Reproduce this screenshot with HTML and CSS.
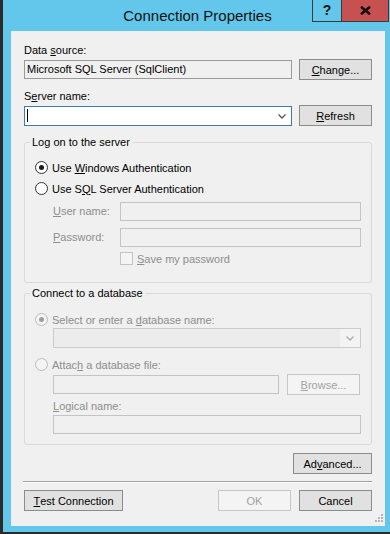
FILE: index.html
```html
<!DOCTYPE html>
<html lang="en">
<head>
<meta charset="utf-8">
<title>Connection Properties</title>
<link rel="stylesheet" href="styles.css">
</head>
<body>
<div class="window">
  <div class="titlebar">
    <div class="title">Connection Properties</div>
    <div class="caption">
      <div class="cap-help">?</div>
      <div class="cap-close"><svg width="11" height="9" viewBox="0 0 11 9"><path d="M1 0.8 L10 8.2 M10 0.8 L1 8.2" stroke="#111" stroke-width="2.6" fill="none"/></svg></div>
    </div>
  </div>
  <div class="client">
    <div class="lbl">Data <u>s</u>ource:</div>
    <div class="row r-ds">
      <div class="tb ro w-ds">Microsoft SQL Server (SqlClient)</div>
      <div class="btn w73"><u>C</u>hange...</div>
    </div>
    <div class="lbl l-server">S<u>e</u>rver name:</div>
    <div class="row r-server">
      <div class="combo focus w-ds"><span class="caret"></span><svg class="chev" width="8" height="5" viewBox="0 0 8 5"><path d="M0.5 0.5 L4 4 L7.5 0.5" stroke="#555" stroke-width="1.3" fill="none"/></svg></div>
      <div class="btn w73"><u>R</u>efresh</div>
    </div>

    <fieldset class="group g-logon">
      <legend>Log on to the server</legend>
      <div class="gbody gb-logon">
        <div class="opt"><span class="radio on"></span><span>Use <u>W</u>indows Authentication</span></div>
        <div class="opt opt2"><span class="radio"></span><span>Use S<u>Q</u>L Server Authentication</span></div>
        <div class="frow fr-user"><span class="flbl dis"><u>U</u>ser name:</span><div class="tb dis w241"></div></div>
        <div class="frow fr-pass"><span class="flbl dis"><u>P</u>assword:</span><div class="tb dis w241"></div></div>
        <div class="chkrow"><span class="chk"></span><span class="dis"><u>S</u>ave my password</span></div>
      </div>
    </fieldset>

    <fieldset class="group g-db">
      <legend>Connect to a database</legend>
      <div class="gbody gb-db">
        <div class="opt dis"><span class="radio disr on"></span><span>Select or enter a <u>d</u>atabase name:</span></div>
        <div class="indent dcombo-wrap">
          <div class="dcombo"><div class="dfield"></div><div class="darrow"><svg width="8" height="5" viewBox="0 0 8 5"><path d="M0.5 0.5 L4 4 L7.5 0.5" stroke="#a8a8a8" stroke-width="1.3" fill="none"/></svg></div></div>
        </div>
        <div class="opt dis opt-attach"><span class="radio disr"></span><span>Attac<u>h</u> a database file:</span></div>
        <div class="indent attach-row">
          <div class="tb dis w226"></div>
          <div class="btn bdis w73"><u>B</u>rowse...</div>
        </div>
        <div class="indent lbl dis l-logical"><u>L</u>ogical name:</div>
        <div class="indent logical-row"><div class="tb dis w308"></div></div>
      </div>
    </fieldset>

    <div class="adv-row"><div class="btn w79">Ad<u>v</u>anced...</div></div>
    <div class="sep"></div>
    <div class="row bottom-row">
      <div class="btn w99"><u>T</u>est Connection</div>
      <div class="right-btns">
        <div class="btn bdis w73">OK</div>
        <div class="btn w73">Cancel</div>
      </div>
    </div>
    <div class="grip">
      <i class="d1"></i><i class="d2"></i><i class="d3"></i><i class="d4"></i><i class="d5"></i><i class="d6"></i>
    </div>
  </div>
</div>
</body>
</html>
```

FILE: styles.css
```css
* { box-sizing: border-box; }
html, body { margin: 0; padding: 0; }
body {
  width: 390px;
  height: 534px;
  overflow: hidden;
  font-family: "Liberation Sans", Arial, sans-serif;
  font-size: 11px;
  color: #000;
  background: #62c7ea;
}
u { text-decoration: underline; text-underline-offset: 1px; }

.window {
  width: 390px;
  height: 534px;
  background: #62c7ea;
  border-left: 3px solid #2b2b2b;
  border-bottom: 2px solid #2b2b2b;
  display: flex;
  flex-direction: column;
}

.titlebar {
  height: 31px;
  display: flex;
  align-items: flex-start;
  flex: none;
}
.title {
  flex: 1;
  text-align: center;
  font-size: 15px;
  line-height: 30px;
  padding-top: 1px;
  padding-left: 80px;
  color: #111;
}
.caption {
  display: flex;
  margin-right: 1px;
}
.cap-help, .cap-close {
  height: 22px;
  border: 1px solid #3a3a3a;
  border-top: none;
  display: flex;
  align-items: center;
  justify-content: center;
}
.cap-help {
  width: 29px;
  border-right: none;
  font-weight: bold;
  font-size: 14px;
  color: #111;
  background: #62c7ea;
  padding-bottom: 1px;
}
.cap-close {
  width: 48px;
  background: #c75050;
}

.client {
  flex: 1;
  margin: 0 5px 6px 8px;
  background: #f0f0f0;
  padding: 12px 13px 0 13px;
  display: flex;
  flex-direction: column;
  position: relative;
}

.lbl { height: 14px; line-height: 14px; }
.row {
  display: flex;
  justify-content: space-between;
  align-items: center;
  height: 21px;
}
.r-ds { margin-top: 2px; }
.l-server { margin-top: 9px; }
.r-server { margin-top: 2px; }

.tb {
  height: 19px;
  border: 1px solid #a5a5a5;
  background: #fff;
  line-height: 17px;
  padding-left: 2px;
  white-space: nowrap;
  overflow: hidden;
}
.tb.ro { background: #f0f0f0; border-color: #9a9a9a; }
.tb.dis { background: #f0f0f0; border-color: #c4c4c4; }
.w-ds { width: 268px; }
.w241 { width: 241px; }
.w226 { width: 226px; }
.w308 { width: 308px; }
.w73 { width: 73px; }
.w79 { width: 79px; }
.w99 { width: 99px; }

.combo {
  height: 20px;
  background: #fff;
  border: 1px solid #3d7bad;
  display: flex;
  align-items: center;
  justify-content: space-between;
  padding: 0 5px 0 2px;
}
.caret { width: 1px; height: 13px; background: #000; }
.chev { margin-top: 1px; }

.btn {
  height: 21px;
  border: 1px solid #8c8c8c;
  background: #e1e1e1;
  display: flex;
  align-items: center;
  justify-content: center;
  line-height: 14px;
  white-space: nowrap;
}
.btn.bdis { border-color: #c6c6c6; background: #f4f4f4; color: #a2a2a2; }

.group {
  margin: 0;
  padding: 0;
  border: 1px solid #d9d9d9;
  border-radius: 3px;
  min-width: 0;
}
.group legend {
  padding: 0 2px;
  margin-left: 5px;
  line-height: 14px;
  height: 14px;
  font-size: 11px;
}
.g-logon { margin-top: 9px; }
.g-db { margin-top: 3px; }
.gbody { padding: 0 10px 0 10px; display: flex; flex-direction: column; }
.gb-logon { padding-top: 11px; padding-bottom: 17px; }
.gb-db { padding-top: 12px; padding-bottom: 10px; }

.opt {
  display: flex;
  align-items: center;
  height: 15px;
  gap: 4px;
  line-height: 14px;
}
.opt2 { margin-top: 6px; }
.radio {
  width: 13px;
  height: 13px;
  border-radius: 50%;
  border: 1px solid #333;
  background: #fff;
  flex: none;
  display: flex;
  align-items: center;
  justify-content: center;
}
.radio.on::after {
  content: "";
  width: 5px;
  height: 5px;
  border-radius: 50%;
  background: #1a1a1a;
}
.radio.disr { border-color: #bcbcbc; background: #f4f4f4; }
.radio.disr.on::after { background: #9f9f9f; }

.dis { color: #8d8d8d; }

.frow {
  display: flex;
  align-items: center;
  justify-content: space-between;
  height: 20px;
  padding-left: 18px;
}
.fr-user { margin-top: 5px; }
.fr-pass { margin-top: 6px; }
.chkrow {
  display: flex;
  align-items: center;
  height: 13px;
  margin-top: 5px;
  padding-left: 85px;
  gap: 4px;
  line-height: 14px;
}
.chk {
  width: 13px;
  height: 13px;
  border: 1px solid #c4c4c4;
  background: #f4f4f4;
  flex: none;
}

.indent { margin-left: 18px; }
.dcombo-wrap { margin-top: 1px; }
.dcombo {
  width: 308px;
  height: 20px;
  border: 1px solid #cbcbcb;
  display: flex;
}
.dfield { flex: 1; background: #ececec; }
.darrow {
  width: 20px;
  background: #f3f3f3;
  display: flex;
  align-items: center;
  justify-content: center;
  padding-top: 1px;
}
.opt-attach { margin-top: 9px; }
.attach-row {
  display: flex;
  align-items: center;
  justify-content: space-between;
  width: 307px;
  height: 21px;
  margin-top: 2px;
}
.l-logical { margin-top: 4px; }
.logical-row { margin-top: 2px; }

.adv-row { display: flex; justify-content: flex-end; margin-top: 8px; }
.sep {
  margin-top: 7px;
  margin-left: -1px;
  height: 2px;
  border-top: 1px solid #a0a0a0;
  border-bottom: 1px solid #fdfdfd;
}
.bottom-row { margin-top: 7px; }
.right-btns { display: flex; gap: 8px; }

.grip {
  position: absolute;
  right: 2px;
  bottom: 4px;
  width: 9px;
  height: 9px;
}
.grip i {
  position: absolute;
  width: 2px;
  height: 2px;
  background: #b5b5b5;
}
.grip .d1 { right: 0; bottom: 0; }
.grip .d2 { right: 3px; bottom: 0; }
.grip .d3 { right: 6px; bottom: 0; }
.grip .d4 { right: 0; bottom: 3px; }
.grip .d5 { right: 3px; bottom: 3px; }
.grip .d6 { right: 0; bottom: 6px; }
```
